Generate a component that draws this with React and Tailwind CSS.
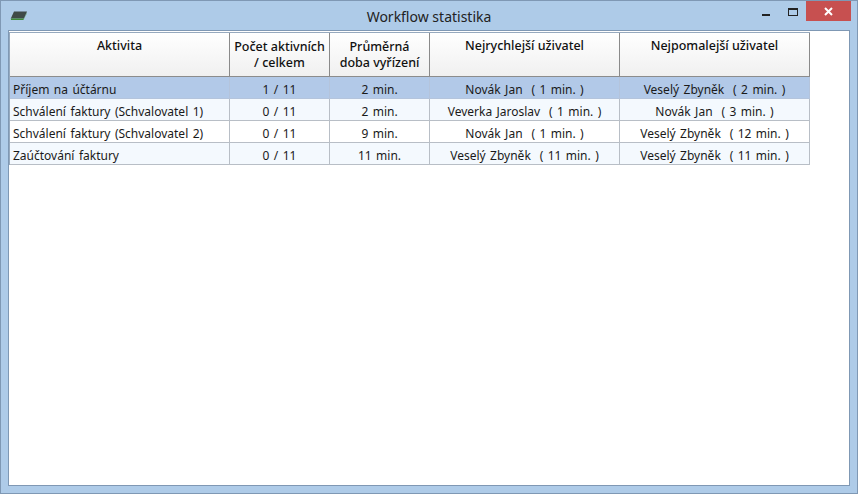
const cols = ["w-[220px]", "w-[100px]", "w-[100px]", "w-[190px]", "w-[190px]"];
const headers = [["Aktivita"], ["Počet aktivních", "/ celkem"], ["Průměrná", "doba vyřízení"], ["Nejrychlejší uživatel"], ["Nejpomalejší uživatel"]];
const rows = [
  { cells: ["Příjem na účtárnu", "1 / 11", "2 min.", "Novák Jan  ( 1 min. )", "Veselý Zbyněk  ( 2 min. )"], bg: "bg-[#b2c9e8]", line: "border-[#b4c4dc]" },
  { cells: ["Schválení faktury (Schvalovatel 1)", "0 / 11", "2 min.", "Veverka Jaroslav  ( 1 min. )", "Novák Jan  ( 3 min. )"], bg: "bg-[#f4f9fe]", line: "border-[#b8bec6]" },
  { cells: ["Schválení faktury (Schvalovatel 2)", "0 / 11", "9 min.", "Novák Jan  ( 1 min. )", "Veselý Zbyněk  ( 12 min. )"], bg: "bg-white", line: "border-[#b8bec6]" },
  { cells: ["Zaúčtování faktury", "0 / 11", "11 min.", "Veselý Zbyněk  ( 11 min. )", "Veselý Zbyněk  ( 11 min. )"], bg: "bg-[#f4f9fe]", line: "border-[#b8bec6]" },
];

export default function App() {
  return (
    <div className="w-[858px] h-[494px] flex flex-col bg-[#aecbe8] border border-[#7f98b4] font-['Noto_Sans','Open_Sans',sans-serif] text-[#1a1a1a] overflow-hidden">
      <div className="h-[29px] shrink-0 flex items-start relative">
        <svg width="18" height="10" viewBox="0 0 18 10" className="ml-[9px] mt-[10px]">
          <path d="M4 0.5H17L14 7.5H0.8Z" fill="#3f4a48" />
          <path d="M0.8 7.5H14L13.4 9H1Z" fill="#3f8a3a" />
          <path d="M14 7.5L17 1L16.5 3L13.4 9Z" fill="#4f9a45" />
        </svg>
        <div className="absolute left-0 right-0 top-[6px] text-center text-[14px] leading-[19px] text-[#222]">Workflow statistika</div>
        <div className="ml-auto flex items-start">
          <div className="w-[8px] h-[2px] bg-[#222] mt-[13px] mr-[18px]" />
          <div className="w-[10px] h-[8px] border border-[#222] border-t-2 mt-[7px] mr-[8px]" />
          <div className="w-[45px] h-[20px] bg-[#c75050] flex items-center justify-center mr-[6px]">
            <svg width="9" height="9" viewBox="0 0 9 9"><path d="M1 1L8 8M8 1L1 8" stroke="#fff" strokeWidth="2" /></svg>
          </div>
        </div>
      </div>
      <div className="flex-1 mx-[7px] mb-[7px] border border-[#7f98b4] bg-white pt-px">
        <div className="border-t border-l border-[#96a9be] w-[801px]">
          <div className="flex h-[44px] border-b border-[#8c8c8c] bg-gradient-to-b from-white to-[#f0f0f0]">
            {headers.map((h, i) => (
              <div key={i} className={`${cols[i]} shrink-0 border-r border-[#8a8a8a] text-center text-[12.5px] leading-[16px] font-medium text-[#111] ${h.length > 1 ? "pt-[6px]" : "pt-[5px]"}`}>
                {h.map((t) => <div key={t}>{t}</div>)}
              </div>
            ))}
          </div>
          {rows.map((r) => (
            <div key={r.cells[0]} className={`flex h-[22px] border-b ${r.line} ${r.bg}`}>
              {r.cells.map((c, i) => (
                <div key={i} className={`${cols[i]} shrink-0 border-r ${r.line} text-[12px] leading-[26px] [word-spacing:1.3px] whitespace-pre ${i === 0 ? "pl-[3px]" : "text-center"}`}>{c}</div>
              ))}
            </div>
          ))}
        </div>
      </div>
    </div>
  );
}
